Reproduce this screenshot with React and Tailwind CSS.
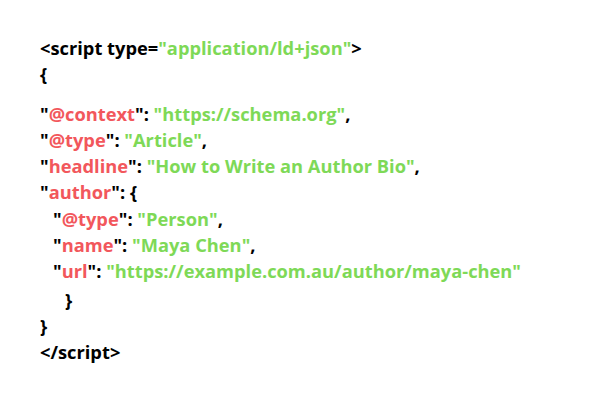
import React from "react";

const R = ({ children }) => <span className="text-[#f2575c]">{children}</span>;
const G = ({ children }) => <span className="text-[#7ed957]">{children}</span>;

const Line = ({ children, className = "" }) => (
  <div className={`h-[26.3px] leading-[26.3px] whitespace-pre ${className}`}>{children}</div>
);

const App = () => {
  return (
    <div className="w-[600px] h-[400px] bg-white text-black font-bold text-[18.3px] pt-[35px] pl-[40px] font-['Open_Sans',sans-serif]">
      <Line>
        {"<script type="}
        <G>"application/ld+json"</G>
        {">"}
      </Line>
      <Line>{"{"}</Line>
      <Line className="mt-[13px]">
        "<R>@context</R>": <G>"https://schema.org"</G>,
      </Line>
      <Line>
        "<R>@type</R>": <G>"Article"</G>,
      </Line>
      <Line>
        "<R>headline</R>": <G>"How to Write an Author Bio"</G>,
      </Line>
      <Line>
        "<R>author</R>": {"{"}
      </Line>
      <div className="pl-[13px]">
        <Line>
          "<R>@type</R>": <G>"Person"</G>,
        </Line>
        <Line>
          "<R>name</R>": <G>"Maya Chen"</G>,
        </Line>
        <Line>
          "<R>url</R>": <G>"https://example.com.au/author/maya-chen"</G>
        </Line>
        <Line className="pl-[12px] mt-[2px]">{"}"}</Line>
      </div>
      <Line>{"}"}</Line>
      <Line>{"</script>"}</Line>
    </div>
  );
};

export default App;
